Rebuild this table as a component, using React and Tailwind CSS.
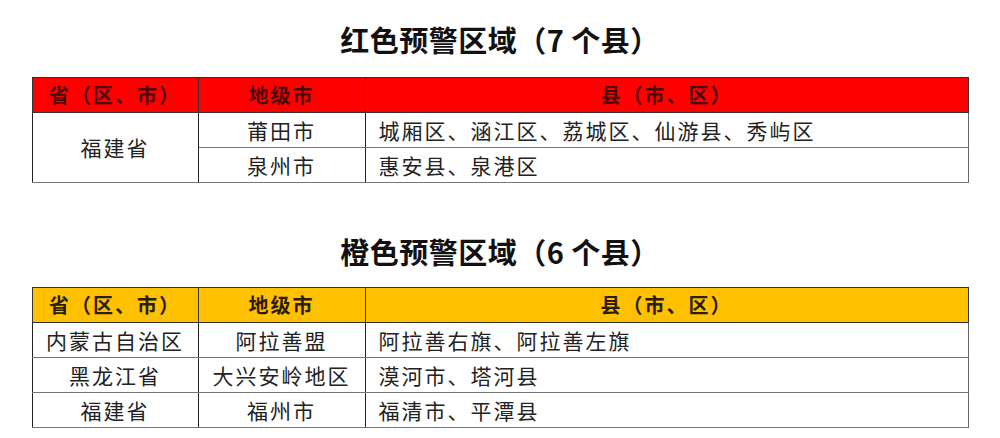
const red = {
  title: "红色预警区域（7 个县）",
  head: "bg-[#ff0000] text-[#4d0606]",
  rows: [
    { prov: "福建省", span: 2, city: "莆田市", county: "城厢区、涵江区、荔城区、仙游县、秀屿区" },
    { city: "泉州市", county: "惠安县、泉港区" },
  ],
};

const orange = {
  title: "橙色预警区域（6 个县）",
  head: "bg-[#ffc000] text-[#2b1d00]",
  rows: [
    { prov: "内蒙古自治区", span: 1, city: "阿拉善盟", county: "阿拉善右旗、阿拉善左旗" },
    { prov: "黑龙江省", span: 1, city: "大兴安岭地区", county: "漠河市、塔河县" },
    { prov: "福建省", span: 1, city: "福州市", county: "福清市、平潭县" },
  ],
};

function WarnTable({ data }) {
  return (
    <table className="w-[937px] table-fixed border-collapse border border-[#666]">
      <colgroup>
        <col className="w-[166px]" />
        <col className="w-[167px]" />
        <col />
      </colgroup>
      <thead>
        <tr className={"h-[35px] text-[20px] font-bold tracking-[2px] " + data.head}>
          <th className="border border-[#333] text-center font-bold">省（区、市）</th>
          <th className="border border-[#333] text-center font-bold">地级市</th>
          <th className="border border-[#333] text-center font-bold">县（市、区）</th>
        </tr>
      </thead>
      <tbody className="text-[21px] tracking-[2px] text-[#222]">
        {data.rows.map((r, i) => (
          <tr key={i} className="h-[35px]">
            {r.prov && (
              <td rowSpan={r.span} className="border-x border-x-[#222] border-y border-y-[#777] text-center leading-none">
                {r.prov}
              </td>
            )}
            <td className="border-x border-x-[#222] border-y border-y-[#777] text-center leading-none">{r.city}</td>
            <td className="border-x border-x-[#666] border-y border-y-[#777] pl-[13px] leading-none">{r.county}</td>
          </tr>
        ))}
      </tbody>
    </table>
  );
}

export default function App() {
  return (
    <div
      className="w-[1000px] h-[438px] bg-white flex flex-col items-center pt-[19px]"
      style={{ fontFamily: '"Noto Sans CJK SC", "Noto Sans", sans-serif' }}
    >
      <h2 className="h-10 leading-10 text-[29px] tracking-[0.5px] font-bold text-[#111]">{red.title}</h2>
      <div className="mt-[18px]">
        <WarnTable data={red} />
      </div>
      <h2 className="mt-[48px] h-10 leading-10 text-[29px] tracking-[0.5px] font-bold text-[#111]">{orange.title}</h2>
      <div className="mt-[16px]">
        <WarnTable data={orange} />
      </div>
    </div>
  );
}
